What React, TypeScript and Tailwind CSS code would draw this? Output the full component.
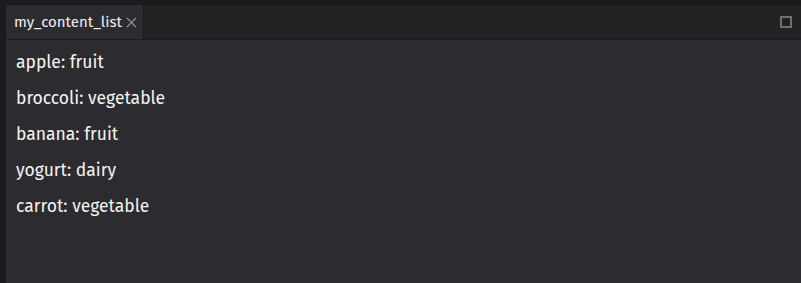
const items = [
  "apple: fruit",
  "broccoli: vegetable",
  "banana: fruit",
  "yogurt: dairy",
  "carrot: vegetable",
];

export default function App() {
  return (
    <div
      className="w-[801px] h-[283px] bg-[#1b1a1d] pt-[5px] pl-[6px] flex flex-col"
      style={{ fontFamily: '"Fira Sans", "Noto Sans", "Open Sans", sans-serif' }}
    >
      <div className="h-[35px] flex bg-[#222124] border-b border-[#1b1a1d]">
        <div className="w-[138px] flex items-center pl-[8px] bg-[#2c2b2f] border-r border-[#1b1a1d] text-[#f0f0ee] text-[15px]">
          <span>my_content_list</span>
          <svg className="ml-[4px]" width="11" height="11" viewBox="0 0 11 11" fill="none" stroke="#8f8e91" strokeWidth="1.3">
            <path d="M1 1L10 10M10 1L1 10" />
          </svg>
        </div>
        <div className="flex-1 flex items-center justify-end pr-[9px]">
          <div className="w-[12px] h-[12px] border-2 border-[#6f6e72]" />
        </div>
      </div>
      <div className="flex-1 bg-[#2c2b2f] pl-[10px] pt-[5px] text-[#f4f4f2] text-[17.5px]">
        {items.map((t) => (
          <div key={t} className="h-[36px] flex items-center">
            {t}
          </div>
        ))}
      </div>
    </div>
  );
}
